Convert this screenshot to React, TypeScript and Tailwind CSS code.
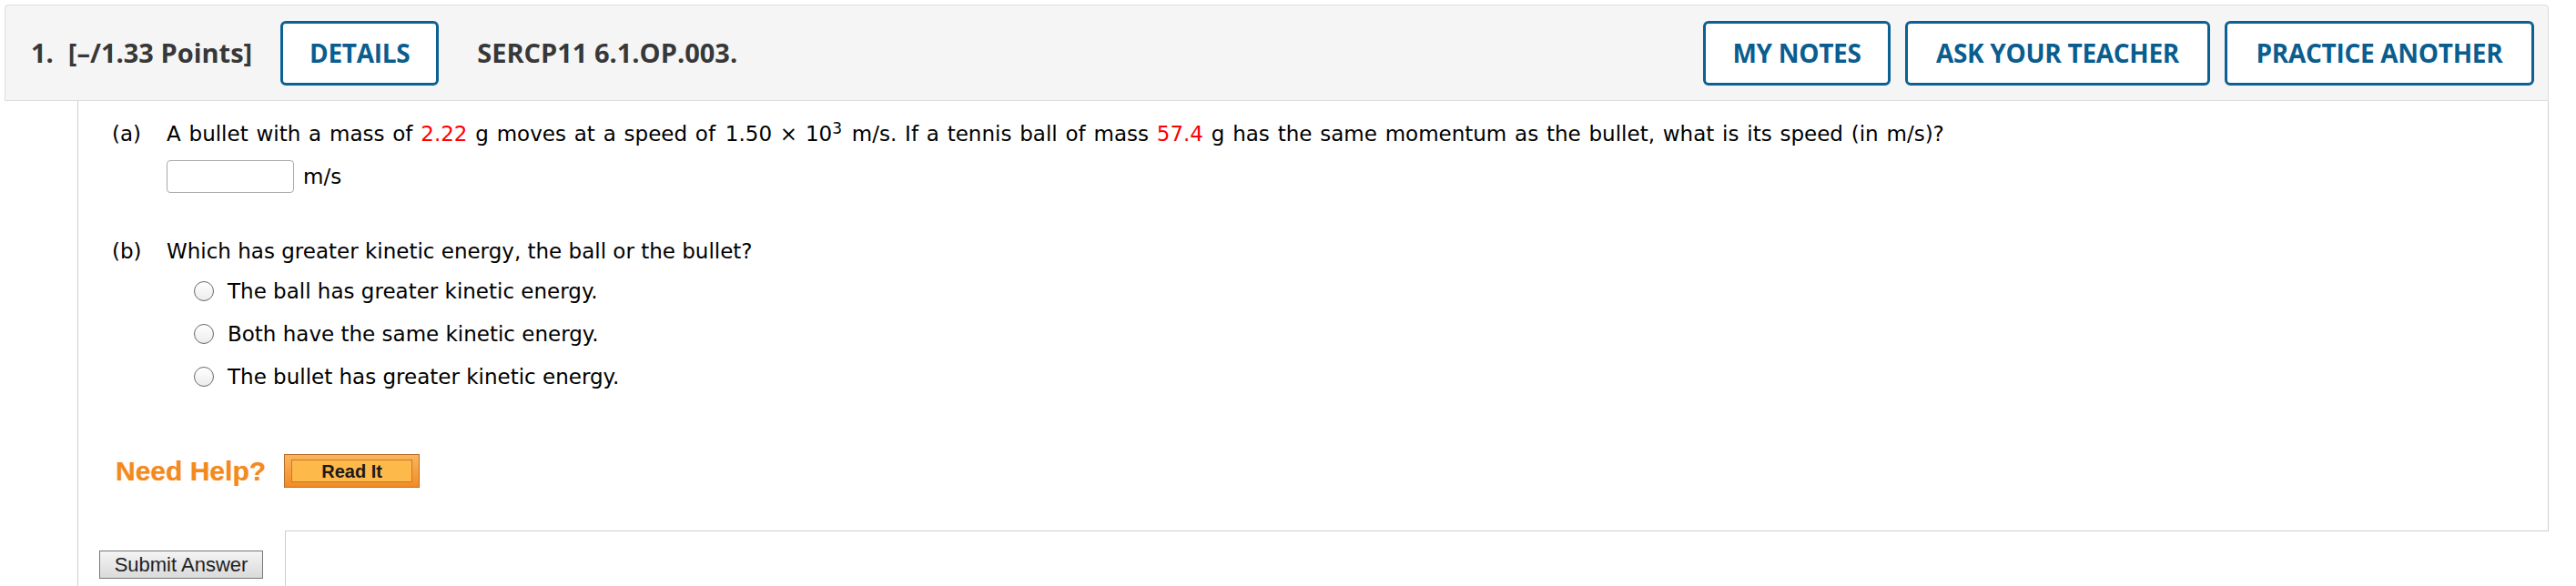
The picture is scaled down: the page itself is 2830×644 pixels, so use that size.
import React from "react";

const headerFont = { fontFamily: '"Open Sans", "Liberation Sans", sans-serif' };

function OutlineButton({ label, width }: { label: string; width: string }) {
  return (
    <button
      className={`${width} h-[71px] shrink-0 rounded-[6px] border-[3px] border-[#0b6193] bg-white text-[28px] font-bold tracking-[-0.3px] text-[#0a5d8f]`}
      style={headerFont}
    >
      {label}
    </button>
  );
}

function Radio({ label }: { label: string }) {
  return (
    <div className="flex h-[26px] items-center">
      <span className="mr-[15px] h-[22px] w-[22px] rounded-full border-[1.5px] border-[#6a6a6a] bg-gradient-to-b from-white to-[#ececec]" />
      <span>{label}</span>
    </div>
  );
}

export default function App() {
  return (
    <div className="min-h-screen bg-white pt-[5px]">
      {/* question header */}
      <div
        className="ml-[5px] flex h-[106px] w-[2795px] items-center rounded-t-[4px] border border-[#dcdcdc] bg-[#f5f5f5] pl-[28px] pr-[15px] text-[29px] font-bold text-[#383838]"
        style={headerFont}
      >
        <span>1.</span>
        <span className="ml-[16px]">[–/1.33 Points]</span>
        <div className="ml-[31px]">
          <OutlineButton label="DETAILS" width="w-[174px]" />
        </div>
        <span className="ml-[42px]">SERCP11 6.1.OP.003.</span>
        <div className="ml-auto flex gap-[16px]">
          <OutlineButton label="MY NOTES" width="w-[206px]" />
          <OutlineButton label="ASK YOUR TEACHER" width="w-[335px]" />
          <OutlineButton label="PRACTICE ANOTHER" width="w-[340px]" />
        </div>
      </div>

      {/* question body */}
      <div className="ml-[85px] w-[2715px] border-l border-[#cfcfcf]">
        <div
          className="border-r border-[#cfcfcf] pb-[47px] pl-[37px] pt-[23px] text-[23px] leading-[26px] text-black"
          style={{ fontFamily: 'Verdana, "DejaVu Sans", sans-serif' }}
        >
          <div className="flex">
            <span className="w-[60px] shrink-0">(a)</span>
            <div>
              <p className="[word-spacing:1.5px]">
                A bullet with a mass of <span className="text-[#ff0000]">2.22</span> g moves at a speed of{" "}
                <span className="px-[2px]">
                  1.50 × 10<sup className="text-[17px]">3</sup>
                </span>{" "}
                m/s. If a tennis ball of mass <span className="text-[#ff0000]">57.4</span> g has the same momentum as
                the bullet, what is its speed (in m/s)?
              </p>
              <div className="mt-[16px] flex items-center gap-[10px]">
                <div className="h-[36px] w-[140px] rounded-[4px] border border-[#a9a9a9] bg-white" />
                <span>m/s</span>
              </div>
            </div>
          </div>

          <div className="mt-[51px] flex">
            <span className="w-[60px] shrink-0">(b)</span>
            <div>
              <p>Which has greater kinetic energy, the ball or the bullet?</p>
              <div className="ml-[30px] mt-[18px] flex flex-col gap-[21px]">
                <Radio label="The ball has greater kinetic energy." />
                <Radio label="Both have the same kinetic energy." />
                <Radio label="The bullet has greater kinetic energy." />
              </div>
            </div>
          </div>

          <div className="mt-[72px] flex items-center" style={{ fontFamily: '"Liberation Sans", Arial, sans-serif' }}>
            <span className="ml-[4px] text-[30px] font-bold leading-[37px] text-[#f28a1f] [text-shadow:0_0_1px_#f9b877]">
              Need Help?
            </span>
            <div className="ml-[20px] h-[37px] w-[149px] border border-[#b46e2b] bg-gradient-to-b from-[#fcb45c] to-[#f18c22] px-[7px] py-[5px]">
              <div className="flex h-full items-center justify-center border border-[#c77a2c] bg-[#fdb949] text-[20px] font-bold text-[#1a1a1a]">
                Read It
              </div>
            </div>
          </div>
        </div>

        {/* submit row */}
        <div className="flex">
          <div className="h-[80px] w-[228px] shrink-0 border-r border-[#cfcfcf] pl-[23px] pt-[22px]">
            <button
              className="h-[31px] w-[180px] border border-[#777] bg-gradient-to-b from-[#f4f4f4] to-[#dadada] text-[22px] leading-none text-[#222]"
              style={{ fontFamily: '"Liberation Sans", Arial, sans-serif' }}
            >
              Submit Answer
            </button>
          </div>
          <div className="flex-1 border-t border-[#cfcfcf]" />
        </div>
      </div>
    </div>
  );
}
